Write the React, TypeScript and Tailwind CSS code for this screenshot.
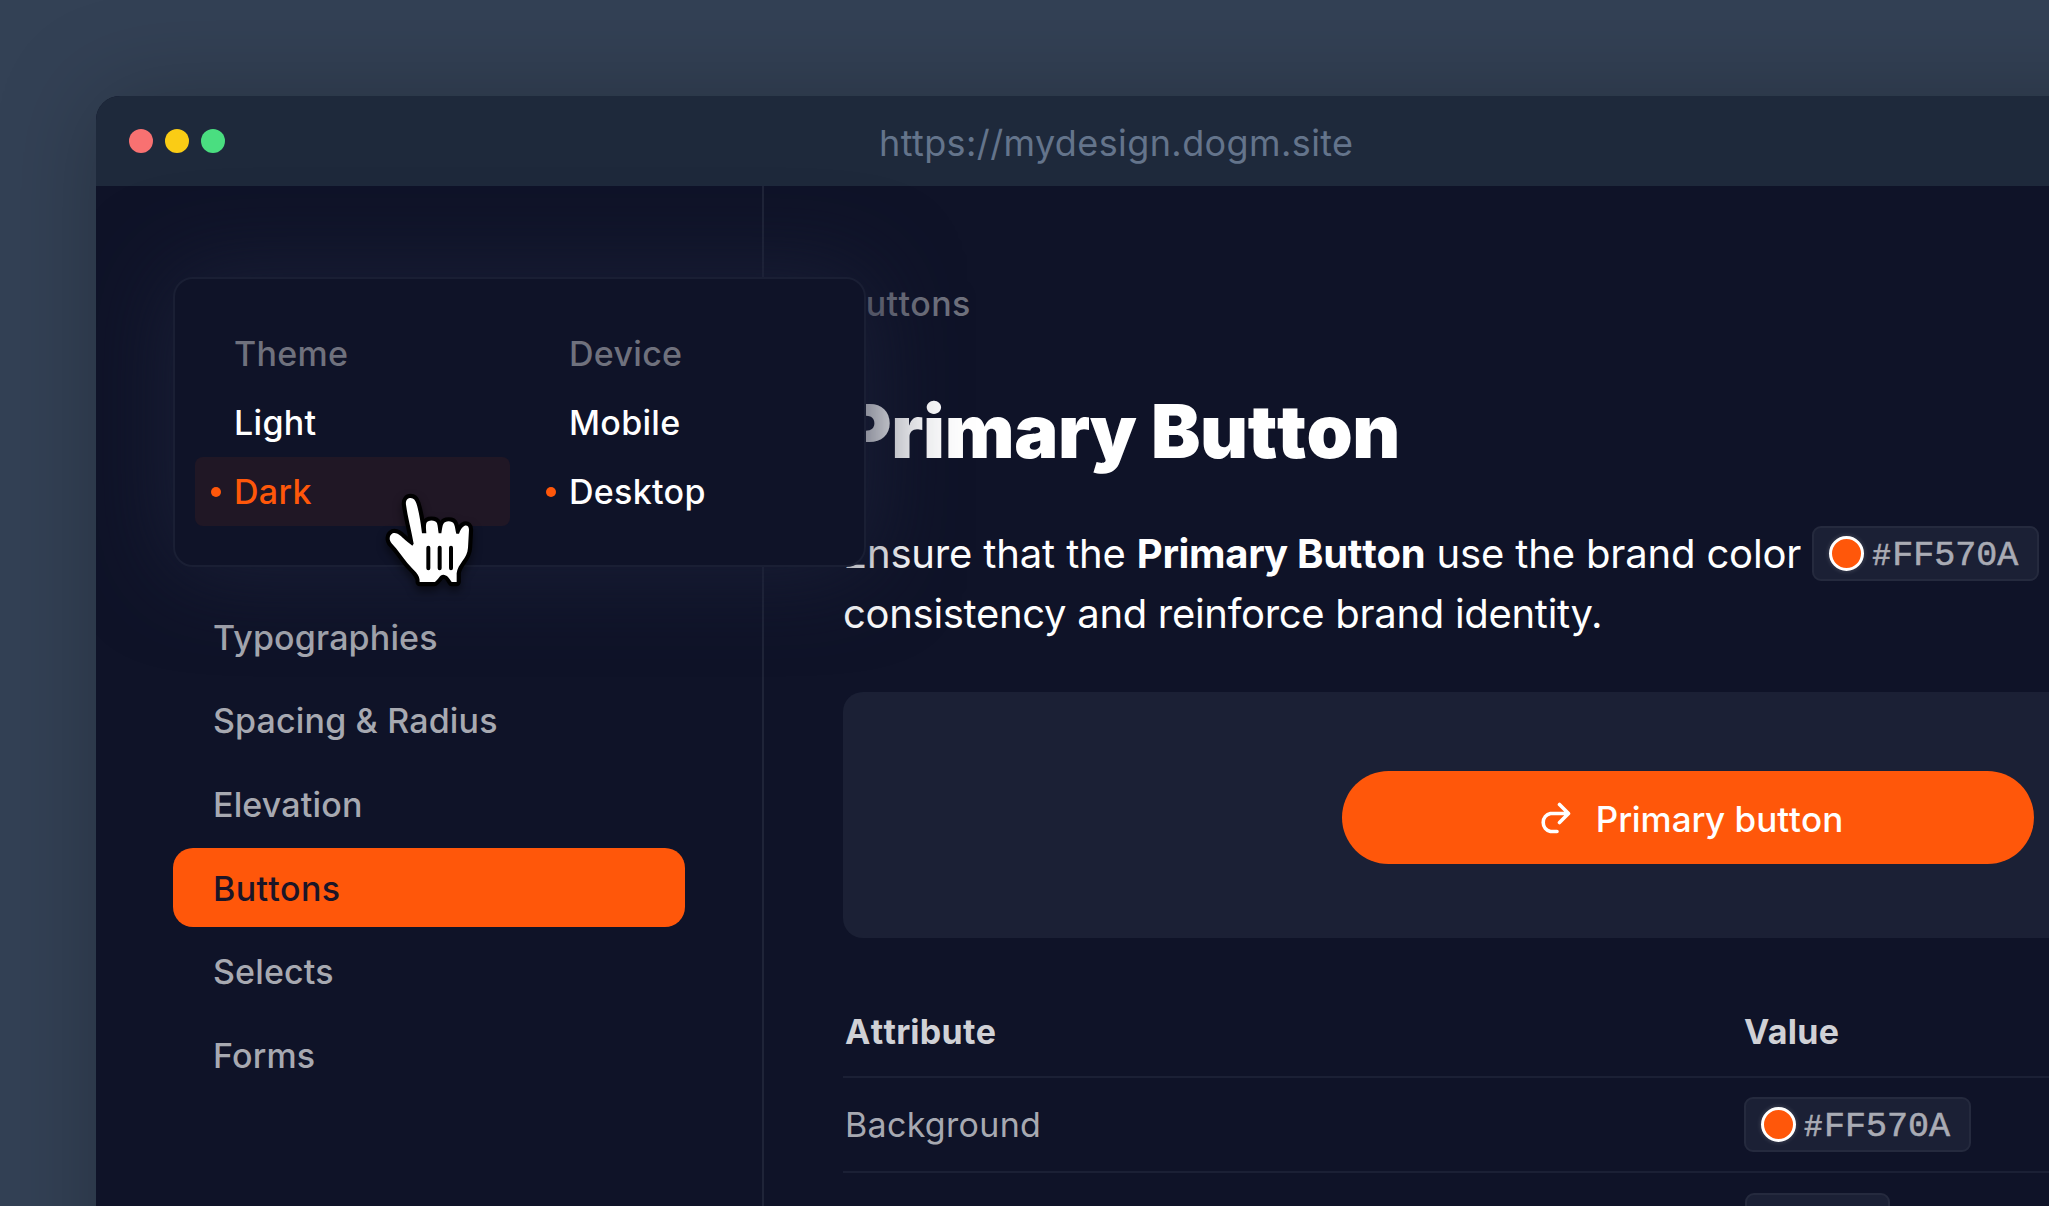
const NAV = ["Typographies", "Spacing & Radius", "Elevation", "Buttons", "Selects", "Forms"];

function ColorChip() {
  return (
    <span className="inline-flex h-[55px] w-[227px] items-center rounded-[9px] border-2 border-[#252a3e] bg-[#1b2035] pl-[15px] align-middle text-[#a9abb4]">
      <span className="size-[35px] shrink-0 rounded-full border-[3px] border-white bg-[#ff570a] shadow-[0_0_5px_rgba(255,255,255,0.2)]" />
      <span className="mt-1.5 ml-2 flex items-center font-['Liberation_Mono',monospace] text-[35px] leading-none tracking-normal [-webkit-text-stroke:0.6px_#a9abb4]">
        <span className="w-[20px] text-[31px] leading-[33px]">#</span>
        <span>FF570A</span>
      </span>
    </span>
  );
}

function MenuItem({ label, dot, active }: { label: string; dot?: boolean; active?: boolean }) {
  return (
    <div
      className={`flex h-[69px] w-[315px] items-center rounded-lg pl-4 ${active ? "bg-[#201725] text-[#ff570a]" : "text-white"}`}
    >
      <span className={`size-2.5 rounded-full ${dot ? "bg-[#ff570a]" : ""}`} />
      <span className="ml-[13px]">{label}</span>
    </div>
  );
}

function HandCursor() {
  return (
    <svg viewBox="0 0 360 360" className="absolute top-[201px] left-[195px] size-[120px] overflow-visible drop-shadow-[0_5px_4px_rgba(0,0,0,0.5)]">
      <path
        d="M108 74C106 61 113 54 122 54C131 54 136 61 139 70C145 88 152 122 156 160L169 160C168 147 167 137 169 130C172 119 197 119 201 130C204 138 204 150 206 160L214 160C216 147 217 137 220 132C225 121 248 122 252 132C256 140 256 152 259 161L267 161C271 150 276 140 284 137C292 135 297 140 297 149L294 203C292 237 263 250 260 280L260 306L245 306C239 295 230 284 220 284C209 284 204 300 194 306L149 306C151 283 130 271 112 249C97 230 84 210 66 191C56 181 57 166 68 160C79 155 91 166 99 174C109 184 119 190 127 197L131 191C123 146 113 111 108 74Z"
        fill="#fff"
        stroke="#000"
        strokeWidth="25"
        strokeLinejoin="round"
        className="[paint-order:stroke]"
      />
      <path d="M175 203V265M209 203V265M243 203V265" stroke="#000" strokeWidth="12" strokeLinecap="round" />
    </svg>
  );
}

export default function App() {
  return (
    <div className="h-[1206px] w-[2049px] overflow-hidden bg-[#334155] pt-24 pl-24 font-['Inter',sans-serif]">
      <div className="h-[1400px] w-[2100px] overflow-hidden rounded-tl-3xl bg-[#0f1328] shadow-[0_0_100px_rgba(0,0,0,0.25)]">
        <header className="flex h-[90px] items-center bg-[#1e293b] pl-[33px]">
          <div className="flex gap-3">
            <span className="size-6 rounded-full bg-[#f87171]" />
            <span className="size-6 rounded-full bg-[#facc15]" />
            <span className="size-6 rounded-full bg-[#4ade80]" />
          </div>
          <span className="mt-[3px] ml-[654px] text-[36px] leading-none tracking-[0.4px] text-[#64748b]">https://mydesign.dogm.site</span>
        </header>

        <div className="relative flex h-[1300px]">
          <aside className="w-[668px] shrink-0 border-r-2 border-[#1f2438] px-[77px] pt-[411px]">
            <nav className="flex flex-col gap-[4.7px] text-[34px] font-medium tracking-[0.15px] text-[#a7a9b1]">
              {NAV.map((item) => (
                <a
                  key={item}
                  className={`flex h-[79px] w-[512px] items-center rounded-[20px] pt-px pl-10 ${item === "Buttons" ? "bg-[#ff570a] tracking-[0.3px] text-[#1c1527] [font-kerning:none]" : ""}`}
                >
                  {item}
                </a>
              ))}
            </nav>
          </aside>

          <main className="w-[1400px] shrink-0 pt-[98px] pl-[79px]">
            <p className="text-[34px] leading-[40px] font-medium tracking-[0.35px] text-[#6f717d] [font-kerning:none]">Buttons</p>
            <h1 className="mt-[62px] text-[74px] leading-[90px] font-black tracking-[-0.3px] text-white [font-kerning:none]">Primary Button</h1>
            <div className="mt-12 text-[40px] text-white">
              <p className="flex h-[59px] items-center tracking-[-0.15px] whitespace-pre">
                Ensure that the <b className="font-bold tracking-[-0.3px] [font-kerning:none]">Primary Button</b> use the brand color <ColorChip />
              </p>
              <p className="flex h-[61px] items-center tracking-[-0.3px]">consistency and reinforce brand identity.</p>
            </div>
            <section className="mt-12 flex h-[246px] items-start rounded-[20px] bg-[#1b2035] pt-[79px] pl-[499px]">
              <button className="flex h-[93px] w-[692px] items-center justify-center gap-[25px] rounded-full bg-[#ff570a] pl-1.5 text-[35px] font-medium text-white">
                <svg viewBox="0 0 32 32" className="size-8" fill="none" stroke="currentColor" strokeWidth="3.6" strokeLinecap="round" strokeLinejoin="round">
                  <path d="M20.500 2.500l9 9-9 9M29 11.500H11.500a9.200 9.200 0 0 0 0 18H18" />
                </svg>
                <span className="pt-1 [font-kerning:none]">Primary button</span>
              </button>
            </section>
            <div className="mt-[49px] text-[34px] tracking-[0.3px]">
              <div className="flex h-[91px] items-center border-b-2 border-[#1b2035] pl-[2px] font-bold text-[#d0d1d6]">
                <span className="w-[899px] [font-kerning:none]">Attribute</span>
                <span>Value</span>
              </div>
              <div className="flex h-[95px] items-center border-b-2 border-[#1b2035] pl-[2px] text-[#a7a9b1]">
                <span className="w-[899px]">Background</span>
                <ColorChip />
              </div>
              <div className="flex h-[95px] items-center pl-[902px]">
                <span className="h-[55px] w-[145px] rounded-[9px] border-2 border-[#252a3e] bg-[#1b2035]" />
              </div>
            </div>
          </main>

          <div className="absolute top-[91px] left-[77px] flex h-[290px] w-[693px] gap-5 rounded-[20px] border-2 border-[#1a1f34] bg-[#0f1328] pt-10 pl-5 text-[34px] font-medium tracking-[0.3px] shadow-[0_0_92px_#1b2038]">
            <div>
              <div className="flex h-[69px] items-center pl-[39px] text-[#6f717d]">Theme</div>
              <MenuItem label="Light" />
              <MenuItem label="Dark" dot active />
            </div>
            <div>
              <div className="flex h-[69px] items-center pl-[39px] text-[#6f717d]">Device</div>
              <MenuItem label="Mobile" />
              <MenuItem label="Desktop" dot />
            </div>
            <HandCursor />
          </div>
        </div>
      </div>
    </div>
  );
}
